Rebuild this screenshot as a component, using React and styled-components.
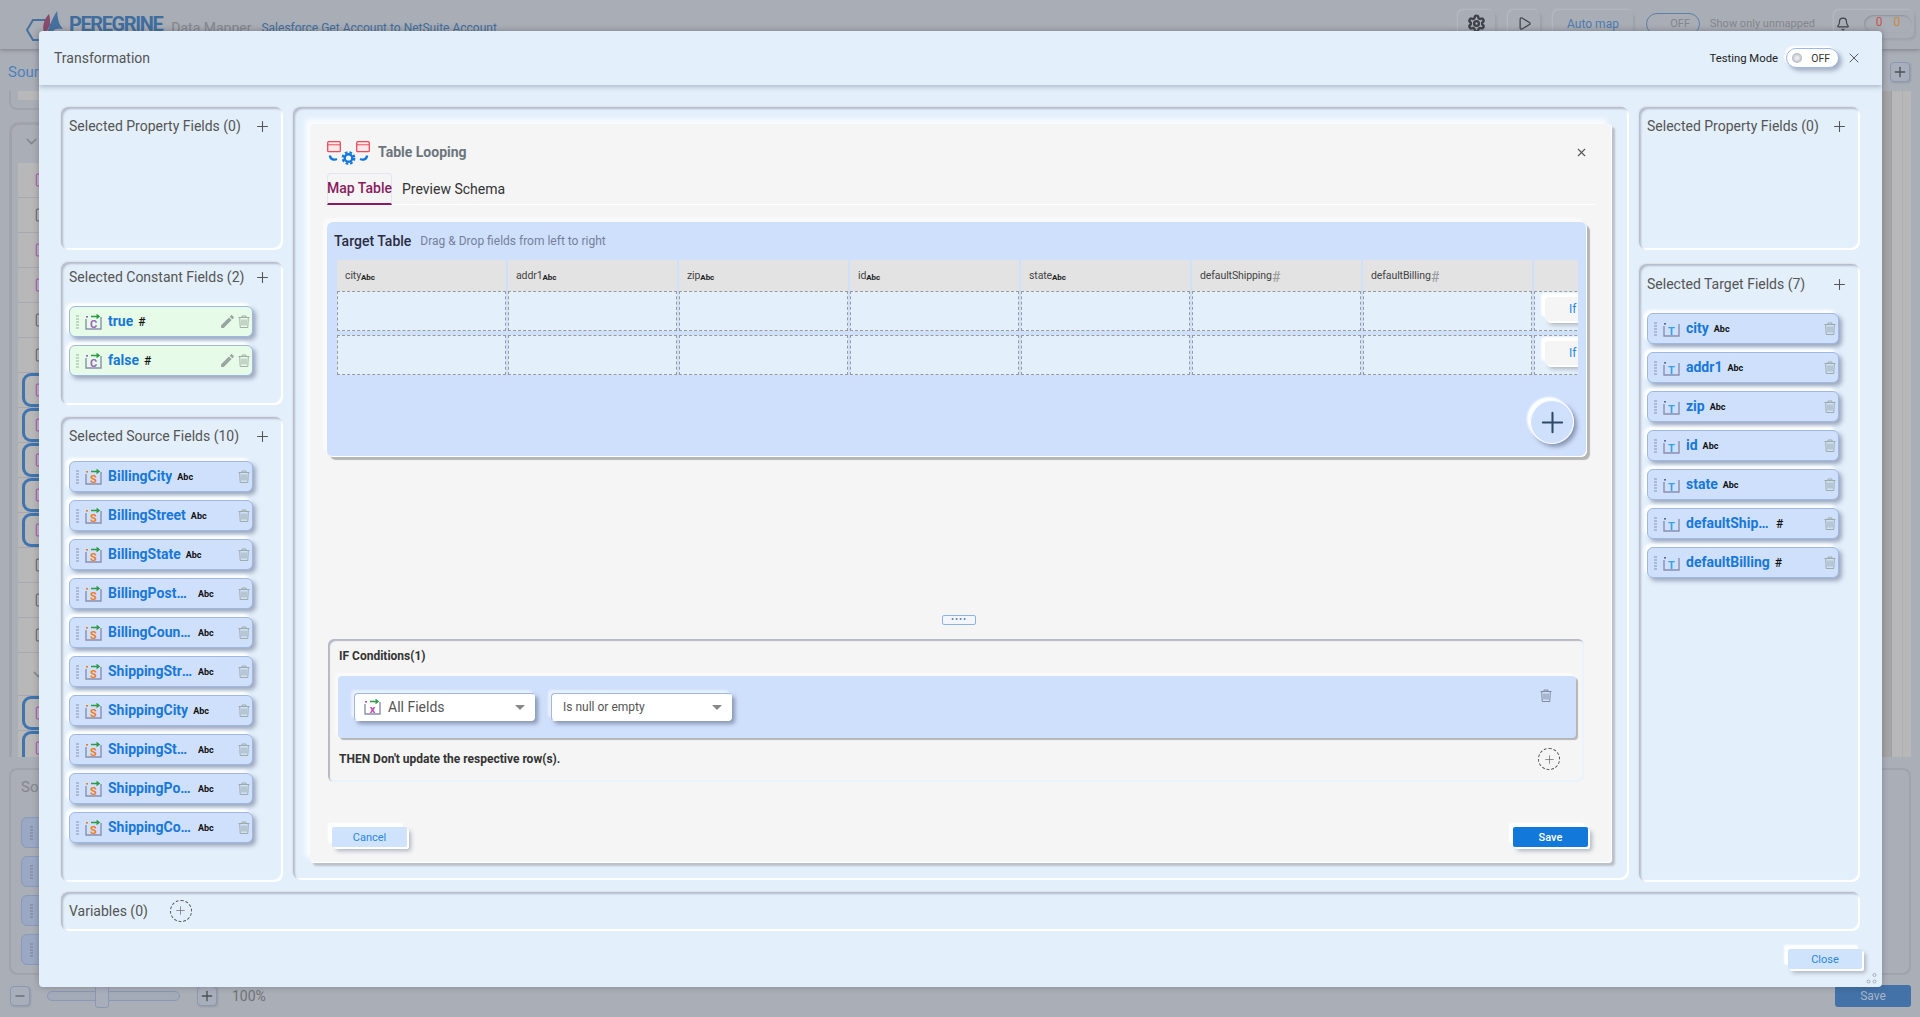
import React from 'react';
import styled, { createGlobalStyle } from 'styled-components';
import { Plus, X, ChevronDown, File, Play, Bell, Settings, Minus } from 'lucide-react';
import { MdEdit } from 'react-icons/md';

const GlobalStyle = createGlobalStyle`
  html, body { margin: 0; padding: 0; }
  body { font-family: Roboto, "Liberation Sans", sans-serif; background: #aaaeb6; }
  * { box-sizing: border-box; }
`;

/* ---------- dimmed page behind the modal ---------- */

const Page = styled.div`
  position: relative;
  width: 1920px;
  height: 1017px;
  overflow: hidden;
  background: #aaaeb6;
  display: flex;
  flex-direction: column;
`;

const TopBar = styled.header`
  height: 49px;
  flex: none;
  display: flex;
  align-items: center;
  padding: 0 6px 0 24px;
  background: #a9adb5;
  box-shadow: 0 1px 4px rgba(80, 80, 90, 0.5);
`;

const Brand = styled.span`
  font-size: 20px;
  font-weight: 700;
  letter-spacing: -1.4px;
  color: #3f6d9e;
  margin-left: 5px;
  margin-top: -2px;
`;

const AppName = styled.span`
  font-size: 14px;
  color: #83868d;
  margin-left: 9px;
  margin-top: 6px;
`;

const FlowName = styled.span`
  font-size: 12px;
  color: #3f6d9e;
  margin-left: 10px;
  margin-top: 6px;
`;

const TopActions = styled.div`
  margin-left: auto;
  display: flex;
  align-items: center;
  gap: 13px;
  margin-top: -2px;
  color: #3f4248;
`;

const BackButton = styled.div`
  height: 28px;
  width: ${(p) => p.$w}px;
  display: flex;
  align-items: center;
  justify-content: center;
  gap: 14px;
  border-radius: 6px;
  font-size: 12px;
  color: ${(p) => p.$c || '#3f4248'};
  box-shadow: -1px -1px 2px #b8bbc2, 2px 2px 2px #9ea2aa;
`;

const BackToggle = styled.div`
  width: 54px;
  height: 22px;
  border: 1px solid #5d7fa8;
  border-radius: 11px;
  font-size: 11px;
  color: #83868d;
  text-align: right;
  padding: 3px 9px;
`;

const Unmapped = styled.span`
  font-size: 11px;
  color: #83868d;
  margin-left: -3px;
  margin-right: 6px;
`;

const Counter = styled.span`
  color: ${(p) => p.$c};
  font-size: 12px;
`;

const CounterPill = styled.div`
  width: 48px;
  height: 18px;
  display: flex;
  justify-content: center;
  gap: 11px;
  border-radius: 9px;
  box-shadow: inset 1px 1px 2px #8f9299;
`;

const SubBar = styled.div`
  height: 42px;
  flex: none;
  display: flex;
  align-items: center;
  justify-content: space-between;
  padding: 3px 10px 0 8px;
  font-size: 15px;
  color: #4e81bb;
`;

const SquareButton = styled.div`
  width: ${(p) => p.$s || 20}px;
  height: ${(p) => p.$s || 20}px;
  display: flex;
  align-items: center;
  justify-content: center;
  color: #4c5058;
  background: #a9aebb;
  border: 1px solid #8a98b5;
  border-radius: 4px;
  box-shadow: 1px 1px 2px #969aa3;
`;

const BackBody = styled.div`
  height: 666px;
  flex: none;
  display: flex;
  justify-content: space-between;
`;

const BackColumn = styled.div`
  width: 500px;
  display: flex;
  flex-direction: column;
  gap: 12px;
  padding-left: 9px;
`;

const SmallPanel = styled.div`
  height: 19px;
  flex: none;
  border: 2px solid #a0a3aa;
  border-top: 0;
  border-radius: 0 0 8px 8px;
  padding-left: 7px;
  &::before {
    content: '';
    display: block;
    height: 9px;
    background: #b8b8b8;
  }
`;

const ListPanel = styled.div`
  flex: 1;
  overflow: hidden;
  border: 3px solid #a0a3aa;
  border-bottom: 0;
  border-radius: 10px 10px 0 0;
  padding: 0 0 0 6px;
`;

const ListHead = styled.div`
  height: 38px;
  display: flex;
  align-items: center;
  gap: 3px;
  padding: 0 0 6px 5px;
  font-size: 15px;
  color: #6a6d73;
  svg { color: #83868d; }
`;

const BackRow = styled.div`
  height: 35px;
  display: flex;
  align-items: center;
  background: #b8b8b8;
  border-bottom: 1px solid #a8a8b0;
  padding-left: 16px;
  position: relative;
  color: ${(p) => (p.$pink ? '#b55abb' : '#6e6e72')};
  ${(p) =>
    p.$picked &&
    `&::before {
      content: '';
      position: absolute;
      left: 4px; top: 0; bottom: 0; right: 0;
      border: 3px solid #3f74ae;
      border-radius: 9px;
    }`}
`;

const GroupChevron = styled(BackRow)`
  height: 43px;
  color: #83868d;
  padding-left: 12px;
`;

const Stripes = styled.div`
  width: 38px;
  background: linear-gradient(
    to right,
    #a2a2a2 0, #a6a6a6 9px, #9da0a8 9px, #9da0a8 10px, #b8b8b8 10px, #b8b8b8 20px,
    #aaaeb6 20px, #aaaeb6 21px, #b8b8b8 21px, #b8b8b8 29px, #aaaeb6 29px
  );
`;

const LowerPanel = styled.div`
  height: 207px;
  flex: none;
  margin: 11px 9px 0 9px;
  border: 2px solid #a0a3aa;
  border-radius: 8px;
  padding: 8px 10px;
  font-size: 15px;
  color: #83868d;
`;

const LowerChip = styled.div`
  width: 184px;
  height: 31px;
  margin-top: 8px;
  padding: 8px 0 0 8px;
  background: #9aa8c3;
  border: 1px solid #8899bb;
  border-radius: 6px;
  &:first-of-type { margin-top: 21px; }
  &::before {
    content: '';
    display: block;
    width: 3px;
    height: 14px;
    background: repeating-linear-gradient(to bottom, #8a94a8 0, #8a94a8 2px, transparent 2px, transparent 3px);
  }
`;

const BottomBar = styled.div`
  flex: 1;
  display: flex;
  align-items: center;
  padding: 0 9px 0 10px;
  font-size: 14px;
  color: #6f7278;
`;

const Slider = styled.div`
  width: 133px;
  height: 10px;
  margin: 0 17px;
  background: #a3aab8;
  border: 1px solid #8a98b5;
  border-radius: 5px;
  display: flex;
  justify-content: center;
  align-items: center;
  &::after {
    content: '';
    width: 12px;
    height: 22px;
    margin-right: 24px;
    background: #a9aebb;
    border: 1px solid #8a98b5;
    border-radius: 3px;
  }
`;

const ZoomLevel = styled.span`
  margin-left: 15px;
`;

const BackSave = styled.div`
  margin-left: auto;
  width: 76px;
  height: 22px;
  margin-top: -1px;
  background: #4272a8;
  border-radius: 3px;
  color: #a9b5c6;
  font-size: 12px;
  text-align: center;
  line-height: 22px;
`;

/* ---------- modal ---------- */

const Modal = styled.section`
  position: absolute;
  left: 39px;
  top: 31px;
  width: 1843px;
  height: 956px;
  background: #e3effb;
  border-radius: 4px;
  display: flex;
  flex-direction: column;
  box-shadow: 0 0 6px rgba(60, 60, 70, 0.35);
`;

const ModalHeader = styled.div`
  height: 54px;
  flex: none;
  display: flex;
  align-items: center;
  padding: 0 20px 0 15px;
  box-shadow: 0 2px 5px rgba(110, 120, 140, 0.45);
`;

const ModalTitle = styled.h1`
  margin: 0;
  font-size: 14px;
  font-weight: 400;
  color: #555;
`;

const TestingLabel = styled.span`
  margin-left: auto;
  font-size: 11.3px;
  color: #222;
`;

const Toggle = styled.div`
  width: 53px;
  height: 20px;
  margin: 0 7px 0 8px;
  background: #fff;
  border: 1px solid #9db8e2;
  border-radius: 10px;
  box-shadow: -2px -2px 2px #fff, 3px 3px 4px rgba(90, 100, 130, 0.45);
  display: flex;
  align-items: center;
  justify-content: space-between;
  padding: 0 8px 0 5px;
  font-size: 10.5px;
  color: #333;
  &::before {
    content: '';
    width: 10px;
    height: 10px;
    border-radius: 50%;
    background: radial-gradient(circle, #e8eaee 20%, #aeb3bc 75%);
  }
`;

const ModalBody = styled.div`
  flex: 1;
  padding: 22px 22px 0;
  display: flex;
  flex-direction: column;
`;

const Columns = styled.div`
  height: 775px;
  display: grid;
  grid-template-columns: 222px 1336px 221px;
  column-gap: 10px;
  align-items: stretch;
`;

const SideColumn = styled.div`
  display: flex;
  flex-direction: column;
  gap: ${(p) => p.$gap}px;
`;

const Panel = styled.div`
  border-radius: 8px;
  box-shadow: inset 2px 2px 2px rgba(140, 145, 165, 0.55), inset -2px -2px 1px #fff, -1px -1px 1px #dfe1e8;
  padding: 0 8px;
  height: ${(p) => (p.$h ? `${p.$h}px` : 'auto')};
  flex: ${(p) => (p.$h ? 'none' : '1')};
`;

const PanelHead = styled.div`
  display: flex;
  align-items: center;
  justify-content: space-between;
  height: ${(p) => p.$h || 38}px;
  padding: 0 4px 0 0;
  font-size: 14px;
  color: #555;
  svg { color: #555; }
`;

const ChipList = styled.div`
  margin-top: ${(p) => p.$top || 6}px;
  display: flex;
  flex-direction: column;
  gap: 8px;
`;

const Chip = styled.div`
  width: ${(p) => p.$w}px;
  height: 31px;
  display: flex;
  align-items: center;
  padding-left: 6px;
  background: ${(p) => (p.$green ? '#e6fce8' : '#cfe0fc')};
  border: 1px solid #9db8e2;
  border-radius: 6px;
  box-shadow: -3px -3px 3px #fff, 3px 3px 4px rgba(90, 100, 130, 0.5);
`;

const DragDots = styled.span`
  width: 3px;
  height: 14px;
  flex: none;
  margin-right: 6px;
  background: repeating-linear-gradient(
    to bottom,
    ${(p) => (p.$green ? '#bfd8c4' : '#a9b9d6')} 0,
    ${(p) => (p.$green ? '#bfd8c4' : '#a9b9d6')} 2px,
    transparent 2px,
    transparent 3px
  );
`;

const ChipName = styled.span`
  margin: -2px 0 0 6px;
  max-width: 85px;
  overflow: hidden;
  white-space: nowrap;
  text-overflow: ellipsis;
  font-size: 14px;
  font-weight: 700;
  color: #1878d8;
`;

const TypeTag = styled.span`
  margin-left: 5px;
  flex: none;
  font-size: ${(p) => (p.$num ? 12 : 9)}px;
  font-weight: ${(p) => (p.$num ? 500 : 700)};
  color: #111;
`;

const ChipTools = styled.span`
  margin-left: auto;
  margin-right: 2px;
  display: flex;
  align-items: center;
  gap: 2px;
  color: #9aa6a0;
`;

const CenterPanel = styled(Panel)`
  height: 773px;
  flex: none;
  padding: 17px;
`;

const Dialog = styled.div`
  height: 739px;
  background: #f5f5f5;
  border-radius: 4px;
  padding: 17px 25px 0 17px;
  display: flex;
  flex-direction: column;
  box-shadow: -5px -5px 4px #f9fcff, inset -1px -1px 0 #fff, 3px 3px 2px #bcc0c8;
`;

const DialogHead = styled.div`
  height: 23px;
  flex: none;
  display: flex;
  align-items: center;
  gap: 8px;
`;

const DialogTitle = styled.span`
  margin-top: -2px;
  font-size: 14px;
  font-weight: 700;
  color: #6c757d;
`;

const DialogClose = styled.span`
  margin-left: auto;
  margin-right: -1px;
  display: flex;
  color: #555;
`;

const Tabs = styled.div`
  height: 32px;
  flex: none;
  margin: 9px -8px 0 0;
  display: flex;
  align-items: stretch;
  border-bottom: 1px solid #fff;
`;

const Tab = styled.div`
  font-size: 14px;
  white-space: nowrap;
  font-weight: ${(p) => (p.$active ? 500 : 400)};
  color: ${(p) => (p.$active ? '#8a1c5e' : '#333')};
  padding-top: 8px;
  ${(p) =>
    p.$active
      ? `border: 1px solid #e4e6ee; border-bottom: 2px solid #8a1c5e; border-radius: 4px 4px 0 0; width: 65px; padding-top: 6px; text-align: center; margin-right: 10px; margin-bottom: -1px; display: flex; justify-content: center;`
      : ''}
`;

const TargetTable = styled.div`
  height: 235px;
  flex: none;
  margin-top: 17px;
  padding: 0 9px 0 7px;
  background: #cfe0fd;
  border-radius: 6px;
  box-shadow: -4px -4px 2px #fafafa, inset -1px -1px 0 #fff, 3px 3px 1px #b5b5b5;
`;

const TableHead = styled.div`
  height: 38px;
  display: flex;
  align-items: center;
  gap: 9px;
`;

const TableTitle = styled.span`
  font-size: 14px;
  font-weight: 500;
  color: #2b2d42;
`;

const TableHint = styled.span`
  font-size: 12px;
  color: #75809a;
`;

const MapGrid = styled.div`
  margin-left: 3px;
  overflow: hidden;
  display: grid;
  grid-template-columns: repeat(8, 169px);
  grid-template-rows: 31px 40px 44px;
  column-gap: 2px;
`;

const HeadCell = styled.div`
  background: #e3e3e3;
  display: flex;
  align-items: center;
  padding-left: 8px;
  font-size: 10.5px;
  letter-spacing: -0.1px;
  color: #444;
`;

const ColType = styled.sub`
  font-size: ${(p) => (p.$num ? 14 : 8)}px;
  font-weight: ${(p) => (p.$num ? 400 : 700)};
  color: ${(p) => (p.$num ? '#9a9a9a' : '#222')};
  margin-top: 3px;
`;

const DropCell = styled.div`
  background: #e3effb;
  border: 1px dashed #9a9a9a;
  margin-top: ${(p) => (p.$second ? 4 : 0)}px;
  padding: 5px 0 0 10px;
`;

const IfButton = styled.div`
  width: 130px;
  height: 24px;
  background: #f5f5f5;
  border-radius: 4px;
  font-size: 12px;
  color: #2a86e0;
  line-height: 24px;
  padding-left: 24px;
  box-shadow: -4px -4px 2px #fff, 2px 2px 0 #fff, 4px 4px 4px #b0b5bf;
`;

const AddRowWrap = styled.div`
  display: flex;
  justify-content: flex-end;
  padding: 25px 4px 0 0;
`;

const AddRow = styled.div`
  width: 44px;
  height: 44px;
  border-radius: 50%;
  background: #cfe0fd;
  display: flex;
  align-items: center;
  justify-content: center;
  color: #2e4a66;
  box-shadow: -3px -3px 2px #fff, inset 0 0 0 1px #fff, 3px 3px 4px rgba(90, 100, 130, 0.6);
`;

const Resizer = styled.div`
  width: 34px;
  height: 10px;
  flex: none;
  margin: 158px 0 0 615px;
  border: 1px solid #8fb1e4;
  border-radius: 2px;
  background: #f3f7fd;
  font-size: 9px;
  line-height: 6px;
  text-align: center;
  letter-spacing: 1px;
  color: #5a7fb8;
`;

const IfPanel = styled.div`
  height: 143px;
  flex: none;
  margin: 14px 3px 0 1px;
  padding: 0 8px 0 10px;
  border-radius: 6px;
  box-shadow: inset 2px 2px 1px #b6bac6, inset -2px -2px 1px #eaf3fd;
  display: flex;
  flex-direction: column;
`;

const BoldLine = styled.div`
  font-size: 12px;
  font-weight: 700;
  color: #333;
`;

const IfTitle = styled(BoldLine)`
  height: 37px;
  padding: 10px 0 0 1px;
`;

const ConditionBox = styled.div`
  height: 62px;
  display: flex;
  align-items: flex-start;
  gap: 16px;
  padding: 17px 24px 0 16px;
  background: #cfe0fd;
  border-radius: 4px;
  box-shadow: -3px -3px 2px #fafafa, 2px 2px 1px #b5b5b5;
`;

const SelectBox = styled.div`
  width: 181px;
  height: 28px;
  display: flex;
  align-items: center;
  gap: 7px;
  padding: 0 9px 0 ${(p) => (p.$fs === 12 ? 11 : 9)}px;
  background: #fff;
  border-radius: 4px;
  border: 1px solid #9db8e2;
  border-bottom-color: #fff;
  border-right-color: #fff;
  font-size: ${(p) => p.$fs}px;
  color: #555;
  box-shadow: -3px -3px 2px #e9f0fc, 3px 3px 4px rgba(90, 100, 130, 0.6);
`;

const Caret = styled.span`
  margin-left: auto;
  width: 0;
  height: 0;
  border-left: 5px solid transparent;
  border-right: 5px solid transparent;
  border-top: 5px solid #888;
`;

const ThenRow = styled(BoldLine)`
  flex: 1;
  display: flex;
  align-items: center;
  justify-content: space-between;
  padding: 0 16px 2px 1px;
`;

const DashedAdd = styled.span`
  width: 22px;
  height: 22px;
  flex: none;
  display: flex;
  align-items: center;
  justify-content: center;
  border: 1px dashed #555;
  border-radius: 50%;
  color: #666;
`;

const ConditionTrash = styled.span`
  margin-left: auto;
  margin-top: -4px;
  color: #7a8292;
  display: flex;
`;

const ActionRow = styled.div`
  margin: 45px -1px 0 5px;
  display: flex;
  justify-content: space-between;
`;

const ActionButton = styled.button`
  width: ${(p) => p.$w || 75}px;
  height: 20px;
  border: 0;
  padding: 0;
  border-radius: 2px;
  font-family: inherit;
  font-size: 11px;
  font-weight: ${(p) => (p.$primary ? 500 : 400)};
  background: ${(p) => (p.$primary ? '#1278da' : '#cfe4fc')};
  color: ${(p) => (p.$primary ? '#fff' : '#2a86e0')};
  box-shadow: -4px -4px 2px #fff, 2px 2px 0 #fff, 4px 4px 4px #b0b5bf;
`;

const VariablesBar = styled(Panel)`
  height: 39px;
  flex: none;
  margin-top: 10px;
  padding-bottom: 2px;
  display: flex;
  align-items: center;
  gap: 22px;
  font-size: 14px;
  color: #555;
`;

const ModalFooter = styled.div`
  margin-top: 18px;
  display: flex;
  justify-content: flex-end;
  margin-right: -2px;
`;

const ResizeDots = styled.svg`
  position: absolute;
  right: 5px;
  bottom: 3px;
`;

/* ---------- drawn icons ---------- */

const LETTER = {
  S: { c: '#f07c1e', bar: '#2e9a44', dot: '#f07c1e' },
  C: { c: '#9b64c0', bar: '#2e9a44', dot: '#9b64c0' },
  T: { c: '#3aa0e8', bar: null, dot: '#5a6a9a' },
  x: { c: '#bb4fa8', bar: '#2e9a44', dot: '#bb4fa8' },
};

const FieldIcon = ({ letter }) => {
  const l = LETTER[letter];
  return (
    <svg width="17" height="16" viewBox="0 0 17 16" style={{ flex: 'none' }}>
      <path d="M1 5v10h15V3" fill="none" stroke="#8b8fae" strokeWidth="1.4" />
      {l.bar && <path d="M6 2.5h8M11.5 0.5l2.6 2-2.6 2" fill="none" stroke={l.bar} strokeWidth="1.4" />}
      <rect x="1" y="2" width="2" height="1.6" fill={l.dot} />
      <text x="8.5" y="13.5" fontSize="11" fontWeight="700" textAnchor="middle" fill={l.c} fontFamily="Roboto, sans-serif">
        {letter}
      </text>
    </svg>
  );
};

const TrashIcon = ({ size = 12 }) => (
  <svg width={size} height={size + 1} viewBox="0 0 12 13" fill="none" stroke="currentColor" strokeWidth="0.9">
    <path d="M0.5 2.5h11M4 2.5V1h4v1.5M1.7 2.5l.5 10h7.6l.5-10M4 4.5v6M6 4.5v6M8 4.5v6" />
  </svg>
);

const LoopIcon = () => (
  <svg width="43" height="24" viewBox="0 0 43 24">
    <g fill="#fde8ea" stroke="#ef4a5a" strokeWidth="1.3">
      <rect x="0.7" y="0.7" width="12.6" height="10" rx="1" />
      <rect x="29.7" y="0.7" width="12.6" height="10" rx="1" />
    </g>
    <path d="M0.7 3.8h12.6M29.7 3.8h12.6" stroke="#ef4a5a" strokeWidth="1" />
    <g fill="none" stroke="#1278da" strokeWidth="2.4">
      <path d="M3 14.5c0 3.5 3.5 5 7 3.5" />
      <path d="M40 14.5c0 3.5 -3.5 5 -7 3.5" />
      <circle cx="21.5" cy="17" r="3.8" />
      <circle cx="21.5" cy="17" r="5.8" strokeDasharray="2.6 2" strokeWidth="2.2" />
    </g>
  </svg>
);

const Logo = () => (
  <svg width="40" height="32" viewBox="0 0 40 32" style={{ flex: 'none', marginTop: 1 }}>
    <path d="M9 11h14l6 10-6 10H9L3 21z" fill="none" stroke="#46719f" strokeWidth="2" />
    <path d="M20 24c-2-7 0-14 5-19 2 6 1 12-2 17z" fill="#8a4a6c" />
    <path d="M23 24c3-8 5-14 10-22 1 7 1 12 6 18-6-1-11 1-16 4z" fill="#46719f" />
  </svg>
);

/* ---------- data ---------- */

const constants = [
  { name: 'true', type: '#' },
  { name: 'false', type: '#' },
];

const sources = [
  'BillingCity',
  'BillingStreet',
  'BillingState',
  'BillingPostalCode',
  'BillingCountry',
  'ShippingStreet',
  'ShippingCity',
  'ShippingState',
  'ShippingPostalCode',
  'ShippingCountry',
].map((name) => ({ name, type: 'Abc' }));

const targets = [
  { name: 'city', type: 'Abc' },
  { name: 'addr1', type: 'Abc' },
  { name: 'zip', type: 'Abc' },
  { name: 'id', type: 'Abc' },
  { name: 'state', type: 'Abc' },
  { name: 'defaultShipping', type: '#' },
  { name: 'defaultBilling', type: '#' },
];

const backRows = [
  [1, 0], [0, 0], [1, 0], [1, 0], [0, 0], [0, 0], [1, 1], [1, 1], [1, 1], [1, 1], [1, 1], [0, 0], [0, 0], [0, 0],
];

/* ---------- parts ---------- */

const FieldChip = ({ field, letter, width, green, edit }) => (
  <Chip $w={width} $green={green}>
    <DragDots $green={green} />
    <FieldIcon letter={letter} />
    <ChipName>{field.name}</ChipName>
    <TypeTag $num={field.type === '#'}>{field.type}</TypeTag>
    <ChipTools>
      {edit && <MdEdit size={17} />}
      <TrashIcon />
    </ChipTools>
  </Chip>
);

const Background = () => (
  <>
    <TopBar>
      <Logo />
      <Brand>PEREGRINE</Brand>
      <AppName>Data Mapper</AppName>
      <FlowName>Salesforce Get Account to NetSuite Account</FlowName>
      <TopActions>
        <BackButton $w={37}><Settings size={19} strokeWidth={3} /></BackButton>
        <BackButton $w={32}><Play size={15} /></BackButton>
        <BackButton $w={80} $c="#4b7cb0">Auto map</BackButton>
        <BackToggle>OFF</BackToggle>
        <Unmapped>Show only unmapped</Unmapped>
        <BackButton $w={80}>
          <Bell size={14} />
          <CounterPill>
            <Counter $c="#c8544f">0</Counter>
            <Counter $c="#c9893a">0</Counter>
          </CounterPill>
        </BackButton>
      </TopActions>
    </TopBar>
    <SubBar>
      <span>Source</span>
      <SquareButton><Plus size={16} /></SquareButton>
    </SubBar>
    <BackBody>
      <BackColumn>
        <SmallPanel />
        <ListPanel>
          <ListHead><ChevronDown size={17} />Source</ListHead>
          {backRows.map(([pink, picked], i) => (
            <BackRow key={i} $pink={pink} $picked={picked}><File size={14} /></BackRow>
          ))}
          <GroupChevron><ChevronDown size={17} /></GroupChevron>
          <BackRow $pink $picked><File size={14} /></BackRow>
          <BackRow $pink $picked><File size={14} /></BackRow>
        </ListPanel>
      </BackColumn>
      <Stripes />
    </BackBody>
    <LowerPanel>
      Source
      <LowerChip />
      <LowerChip />
      <LowerChip />
      <LowerChip />
    </LowerPanel>
    <BottomBar>
      <SquareButton><Minus size={14} /></SquareButton>
      <Slider />
      <SquareButton><Plus size={16} /></SquareButton>
      <ZoomLevel>100%</ZoomLevel>
      <BackSave>Save</BackSave>
    </BottomBar>
  </>
);

const columns = targets.map((t) => t.name);

export default function App() {
  return (
    <Page>
      <GlobalStyle />
      <Background />
      <Modal>
        <ModalHeader>
          <ModalTitle>Transformation</ModalTitle>
          <TestingLabel>Testing Mode</TestingLabel>
          <Toggle>OFF</Toggle>
          <X size={16} strokeWidth={1.2} color="#333" />
        </ModalHeader>
        <ModalBody>
          <Columns>
            <SideColumn $gap={12}>
              <Panel $h={143}>
                <PanelHead>Selected Property Fields (0)<Plus size={17} strokeWidth={1.5} /></PanelHead>
              </Panel>
              <Panel $h={143}>
                <PanelHead $h={30}>Selected Constant Fields (2)<Plus size={17} strokeWidth={1.5} /></PanelHead>
                <ChipList $top={14}>
                  {constants.map((f) => (
                    <FieldChip key={f.name} field={f} letter="C" width={184} green edit />
                  ))}
                </ChipList>
              </Panel>
              <Panel>
                <PanelHead>Selected Source Fields (10)<Plus size={17} strokeWidth={1.5} /></PanelHead>
                <ChipList>
                  {sources.map((f) => (
                    <FieldChip key={f.name} field={f} letter="S" width={184} />
                  ))}
                </ChipList>
              </Panel>
            </SideColumn>

            <CenterPanel>
              <Dialog>
                <DialogHead>
                  <LoopIcon />
                  <DialogTitle>Table Looping</DialogTitle>
                  <DialogClose><X size={13} strokeWidth={2} /></DialogClose>
                </DialogHead>
                <Tabs>
                  <Tab $active>Map Table</Tab>
                  <Tab>Preview Schema</Tab>
                </Tabs>
                <TargetTable>
                  <TableHead>
                    <TableTitle>Target Table</TableTitle>
                    <TableHint>Drag &amp; Drop fields from left to right</TableHint>
                  </TableHead>
                  <MapGrid>
                    {targets.map((t) => (
                      <HeadCell key={t.name}>
                        {t.name}
                        <ColType $num={t.type === '#'}>{t.type}</ColType>
                      </HeadCell>
                    ))}
                    <HeadCell />
                    {[0, 1].map((row) => (
                      <React.Fragment key={row}>
                        {columns.map((c) => (
                          <DropCell key={c} $second={row === 1} />
                        ))}
                        <DropCell $second={row === 1}>
                          <IfButton>If Condition</IfButton>
                        </DropCell>
                      </React.Fragment>
                    ))}
                  </MapGrid>
                  <AddRowWrap>
                    <AddRow><Plus size={33} strokeWidth={1.5} /></AddRow>
                  </AddRowWrap>
                </TargetTable>
                <Resizer>••••</Resizer>
                <IfPanel>
                  <IfTitle>IF Conditions(1)</IfTitle>
                  <ConditionBox>
                    <SelectBox $fs={14}>
                      <FieldIcon letter="x" />
                      All Fields
                      <Caret />
                    </SelectBox>
                    <SelectBox $fs={12}>
                      Is null or empty
                      <Caret />
                    </SelectBox>
                    <ConditionTrash><TrashIcon /></ConditionTrash>
                  </ConditionBox>
                  <ThenRow>
                    THEN Don't update the respective row(s).
                    <DashedAdd><Plus size={13} strokeWidth={1.3} /></DashedAdd>
                  </ThenRow>
                </IfPanel>
                <ActionRow>
                  <ActionButton>Cancel</ActionButton>
                  <ActionButton $primary>Save</ActionButton>
                </ActionRow>
              </Dialog>
            </CenterPanel>

            <SideColumn $gap={14}>
              <Panel $h={143}>
                <PanelHead>Selected Property Fields (0)<Plus size={17} strokeWidth={1.5} /></PanelHead>
              </Panel>
              <Panel>
                <PanelHead $h={40}>Selected Target Fields (7)<Plus size={17} strokeWidth={1.5} /></PanelHead>
                <ChipList $top={9}>
                  {targets.map((f) => (
                    <FieldChip key={f.name} field={f} letter="T" width={192} />
                  ))}
                </ChipList>
              </Panel>
            </SideColumn>
          </Columns>
          <VariablesBar>
            Variables (0)
            <DashedAdd><Plus size={13} strokeWidth={1.3} /></DashedAdd>
          </VariablesBar>
          <ModalFooter>
            <ActionButton $w={74}>Close</ActionButton>
          </ModalFooter>
        </ModalBody>
        <ResizeDots width="11" height="11" viewBox="0 0 11 11" fill="none" stroke="#a9adb5">
          <circle cx="8.5" cy="2" r="1.5" />
          <circle cx="2.5" cy="8.5" r="1.5" />
          <circle cx="8.5" cy="8.5" r="1.5" />
        </ResizeDots>
      </Modal>
    </Page>
  );
}
